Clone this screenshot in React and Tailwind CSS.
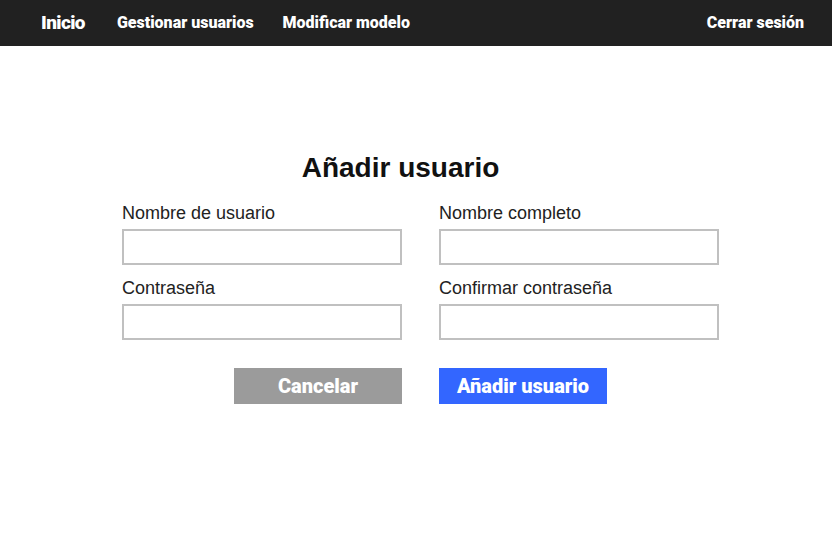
import React, { useState } from 'react';

const Field = ({ label, value, onChange, type = 'text' }) => (
    <div className="flex flex-col">
        <label className="text-[18px] leading-[22px] text-[#222222] mb-[5px]">{label}</label>
        <input
            type={type}
            value={value}
            onChange={(e) => onChange(e.target.value)}
            className="w-[280px] h-[36px] border-2 border-[#c0c0c0] bg-white px-2 outline-none"
        />
    </div>
);

const App = () => {
    const [form, setForm] = useState({ username: '', fullName: '', password: '', confirm: '' });
    const set = (field) => (value) => setForm({ ...form, [field]: value });

    return (
        <div className="min-h-[555px] bg-white" style={{ fontFamily: '"Liberation Sans", Arial, sans-serif' }}>
            {/* Top navigation */}
            <nav className="h-[46px] bg-[#212121] flex items-center pl-[41px] pr-[28px] font-['Roboto',sans-serif] text-white">
                <a className="text-[19px] font-black tracking-[-0.6px] mr-[32px]">Inicio</a>
                <a className="text-[16px] font-black mr-[29px]">Gestionar usuarios</a>
                <a className="text-[16px] font-black">Modificar modelo</a>
                <a className="text-[16px] font-black ml-auto">Cerrar sesión</a>
            </nav>

            <main className="ml-[122px] w-[597px] pt-[106px]">
                <h1 className="text-[28px] leading-[32px] font-bold text-[#111111] text-center pr-[40px] mb-[18px]">Añadir usuario</h1>

                <div className="grid grid-cols-[280px_280px] gap-x-[37px] gap-y-[12px]">
                    <Field label="Nombre de usuario" value={form.username} onChange={set('username')} />
                    <Field label="Nombre completo" value={form.fullName} onChange={set('fullName')} />
                    <Field label="Contraseña" type="password" value={form.password} onChange={set('password')} />
                    <Field label="Confirmar contraseña" type="password" value={form.confirm} onChange={set('confirm')} />
                </div>

                <div className="grid grid-cols-[280px_280px] gap-x-[37px] mt-[28px] font-['Roboto',sans-serif]">
                    <div className="flex justify-end">
                        <button type="button" className="w-[168px] h-[36px] bg-[#9b9b9b] text-white text-[20px] font-black">
                            Cancelar
                        </button>
                    </div>
                    <div className="flex justify-start">
                        <button type="button" className="w-[168px] h-[36px] bg-[#3366ff] text-white text-[20px] font-black">
                            Añadir usuario
                        </button>
                    </div>
                </div>
            </main>
        </div>
    );
};

export default App;
